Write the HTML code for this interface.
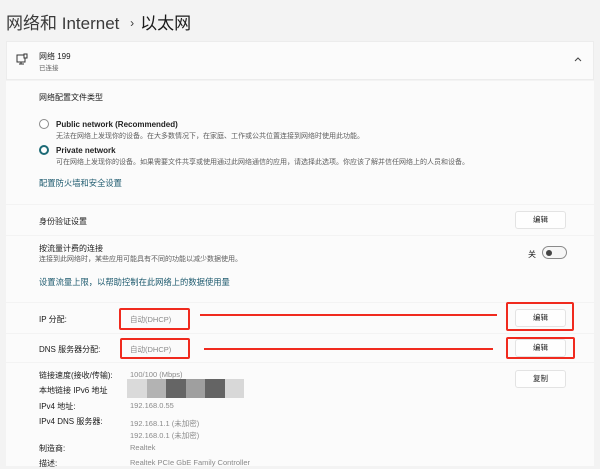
<!DOCTYPE html>
<html><head><meta charset="utf-8"><style>
*{margin:0;padding:0;box-sizing:border-box}
body{width:600px;height:466px;background:#f3f3f3;font-family:"Liberation Sans","Noto Sans CJK SC",sans-serif;color:#1b1b1b;position:relative;overflow:hidden}
.a{position:absolute;white-space:nowrap}
.card{position:absolute;left:6px;width:588px;background:#fbfbfb}
.t{font-size:8px}
.d{font-size:7px;color:#5f5f5f}
.g{font-size:7.5px;color:#8a8a8a}
.btn{position:absolute;width:51px;height:18px;background:#fefefe;border:1px solid #e3e3e3;border-radius:3px;font-size:7.5px;text-align:center;line-height:16px}
.red{position:absolute;border:2px solid #f02a1e;border-radius:2px}
.ln{position:absolute;height:1.5px;background:#f02a1e}
.link{font-size:8.3px;color:#1d5a6e}
</style></head><body>
<div class="a" style="left:6px;top:9px;font-size:17px;color:#3a3a3a">网络和 Internet <span style="font-size:12px;margin:0 6px;position:relative;top:-2px">›</span><span style="color:#1b1b1b">以太网</span></div>

<div class="card" style="top:41px;height:39px;border:1px solid #ececec"></div>
<svg class="a" style="left:16px;top:53px" width="13" height="14" viewBox="0 0 13 14"><rect x="1" y="2" width="8" height="7" fill="none" stroke="#333" stroke-width="1"/><rect x="8" y="1" width="3" height="4" fill="#fbfbfb" stroke="#333" stroke-width="1"/><path d="M3 11h5M5 9v2" stroke="#333" stroke-width="1"/></svg>
<div class="a t" style="left:39px;top:51px">网络 199</div>
<div class="a d" style="left:39px;top:62px;font-size:6.5px">已连接</div>
<svg class="a" style="left:574px;top:56px" width="8" height="6"><path d="M1 5L4 2L7 5" fill="none" stroke="#444" stroke-width="1"/></svg>

<div class="card" style="top:81px;height:123px"></div>
<div class="a t" style="left:39px;top:92px">网络配置文件类型</div>
<div class="a" style="left:39px;top:119px;width:10px;height:10px;border:1px solid #8a8a8a;border-radius:50%;background:#fff"></div>
<div class="a t" style="left:56px;top:120px;font-weight:bold;color:#222">Public network (Recommended)</div>
<div class="a d" style="left:56px;top:131px">无法在网络上发现你的设备。在大多数情况下，在家庭、工作或公共位置连接到网络时使用此功能。</div>
<div class="a" style="left:39px;top:145px;width:10px;height:10px;border:2.5px solid #1d6a76;border-radius:50%;background:#fff"></div>
<div class="a t" style="left:56px;top:146px;font-weight:bold;color:#222">Private network</div>
<div class="a d" style="left:56px;top:157px">可在网络上发现你的设备。如果需要文件共享或使用通过此网络通信的应用，请选择此选项。你应该了解并信任网络上的人员和设备。</div>
<div class="a link" style="left:39px;top:177px">配置防火墙和安全设置</div>

<div class="card" style="top:205px;height:30px"></div>
<div class="a t" style="left:39px;top:216px">身份验证设置</div>
<div class="btn" style="left:515px;top:211px">编辑</div>

<div class="card" style="top:236px;height:66px"></div>
<div class="a t" style="left:39px;top:243px">按流量计费的连接</div>
<div class="a d" style="left:39px;top:254px">连接到此网络时，某些应用可能具有不同的功能以减少数据使用。</div>
<div class="a t" style="left:528px;top:249px">关</div>
<div class="a" style="left:542px;top:246px;width:25px;height:13px;border:1px solid #8a8a8a;border-radius:7px;background:#f6f6f6"></div>
<div class="a" style="left:546px;top:250px;width:6px;height:6px;border-radius:50%;background:#444"></div>
<div class="a link" style="left:39px;top:276px">设置流量上限，以帮助控制在此网络上的数据使用量</div>

<div class="card" style="top:303px;height:30px"></div>
<div class="a t" style="left:39px;top:314px">IP 分配:</div>
<div class="a g" style="left:130px;top:314px">自动(DHCP)</div>
<div class="btn" style="left:515px;top:309px">编辑</div>
<div class="card" style="top:334px;height:28px"></div>
<div class="a t" style="left:39px;top:344px">DNS 服务器分配:</div>
<div class="a g" style="left:130px;top:344px">自动(DHCP)</div>
<div class="btn" style="left:515px;top:339px">编辑</div>
<div class="red" style="left:119px;top:308px;width:71px;height:22px"></div>
<div class="ln" style="left:200px;top:314px;width:297px"></div>
<div class="red" style="left:506px;top:302px;width:68px;height:29px"></div>
<div class="red" style="left:120px;top:338px;width:70px;height:21px"></div>
<div class="ln" style="left:204px;top:348px;width:289px"></div>
<div class="red" style="left:506px;top:337px;width:69px;height:22px"></div>

<div class="card" style="top:363px;height:103px"></div>
<div class="a t" style="left:39px;top:370px">链接速度(接收/传输):</div>
<div class="a g" style="left:130px;top:370px">100/100 (Mbps)</div>
<div class="a t" style="left:39px;top:385px">本地链接 IPv6 地址</div>
<div class="a" style="left:127px;top:379px;width:117px;height:19px;display:flex">
<div style="flex:1;background:#dadada"></div><div style="flex:1;background:#b3b3b3"></div><div style="flex:1;background:#656565"></div><div style="flex:1;background:#9f9f9f"></div><div style="flex:1;background:#646464"></div><div style="flex:1;background:#d8d8d8"></div></div>
<div class="a t" style="left:39px;top:401px">IPv4 地址:</div>
<div class="a g" style="left:130px;top:401px">192.168.0.55</div>
<div class="a t" style="left:39px;top:416px">IPv4 DNS 服务器:</div>
<div class="a g" style="left:130px;top:418px">192.168.1.1 (未加密)</div>
<div class="a g" style="left:130px;top:430px">192.168.0.1 (未加密)</div>
<div class="a t" style="left:39px;top:443px">制造商:</div>
<div class="a g" style="left:130px;top:443px">Realtek</div>
<div class="a t" style="left:39px;top:458px">描述:</div>
<div class="a g" style="left:130px;top:458px">Realtek PCIe GbE Family Controller</div>
<div class="btn" style="left:515px;top:370px">复制</div>
</body></html>
